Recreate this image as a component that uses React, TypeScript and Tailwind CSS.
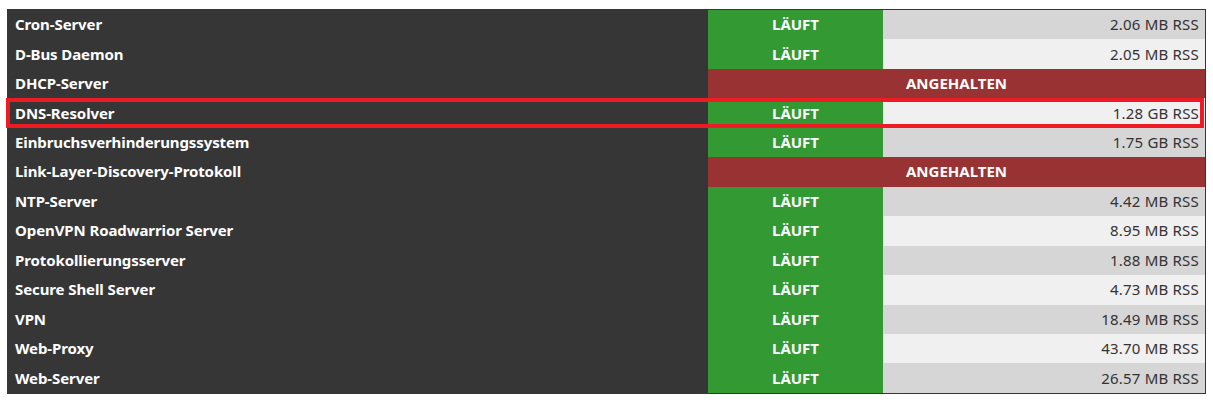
import React from "react";

type Dienst = { name: string; laeuft: boolean; rss?: string };

const dienste: Dienst[] = [
    { name: "Cron-Server", laeuft: true, rss: "2.06 MB RSS" },
    { name: "D-Bus Daemon", laeuft: true, rss: "2.05 MB RSS" },
    { name: "DHCP-Server", laeuft: false },
    { name: "DNS-Resolver", laeuft: true, rss: "1.28 GB RSS" },
    { name: "Einbruchsverhinderungssystem", laeuft: true, rss: "1.75 GB RSS" },
    { name: "Link-Layer-Discovery-Protokoll", laeuft: false },
    { name: "NTP-Server", laeuft: true, rss: "4.42 MB RSS" },
    { name: "OpenVPN Roadwarrior Server", laeuft: true, rss: "8.95 MB RSS" },
    { name: "Protokollierungsserver", laeuft: true, rss: "1.88 MB RSS" },
    { name: "Secure Shell Server", laeuft: true, rss: "4.73 MB RSS" },
    { name: "VPN", laeuft: true, rss: "18.49 MB RSS" },
    { name: "Web-Proxy", laeuft: true, rss: "43.70 MB RSS" },
    { name: "Web-Server", laeuft: true, rss: "26.57 MB RSS" },
];

export default function App() {
    return (
        <div className="w-[1213px] h-[402px] bg-white pt-[9px] pl-[7px]" style={{ fontFamily: '"Noto Sans", "Open Sans", sans-serif' }}>
            <div className="relative w-[1199px] border border-[#363636] bg-[#363636]">
                {dienste.map((d, i) => (
                    <div key={d.name} className="grid grid-cols-[700px_175px_1fr] h-[29.46px] text-[15px] leading-none">
                        <div className="flex items-center pl-[7px] font-bold text-white tracking-[-0.1px]">{d.name}</div>
                        {d.laeuft ? (
                            <>
                                <div className="flex items-center justify-center bg-[#339933] font-bold text-white">LÄUFT</div>
                                <div className={`flex items-center justify-end pr-[6px] text-[#333333] tracking-[0.2px] ${i % 2 === 0 ? "bg-[#d6d6d6]" : "bg-[#f0f0f0]"}`}>
                                    {d.rss}
                                </div>
                            </>
                        ) : (
                            <div className="col-span-2 flex items-center justify-center bg-[#993333] font-bold text-white">ANGEHALTEN</div>
                        )}
                    </div>
                ))}
                <div className="absolute left-[-2px] top-[88px] w-[1198px] h-[30px] border-[4px] border-[#ed1c24]" />
            </div>
        </div>
    );
}
